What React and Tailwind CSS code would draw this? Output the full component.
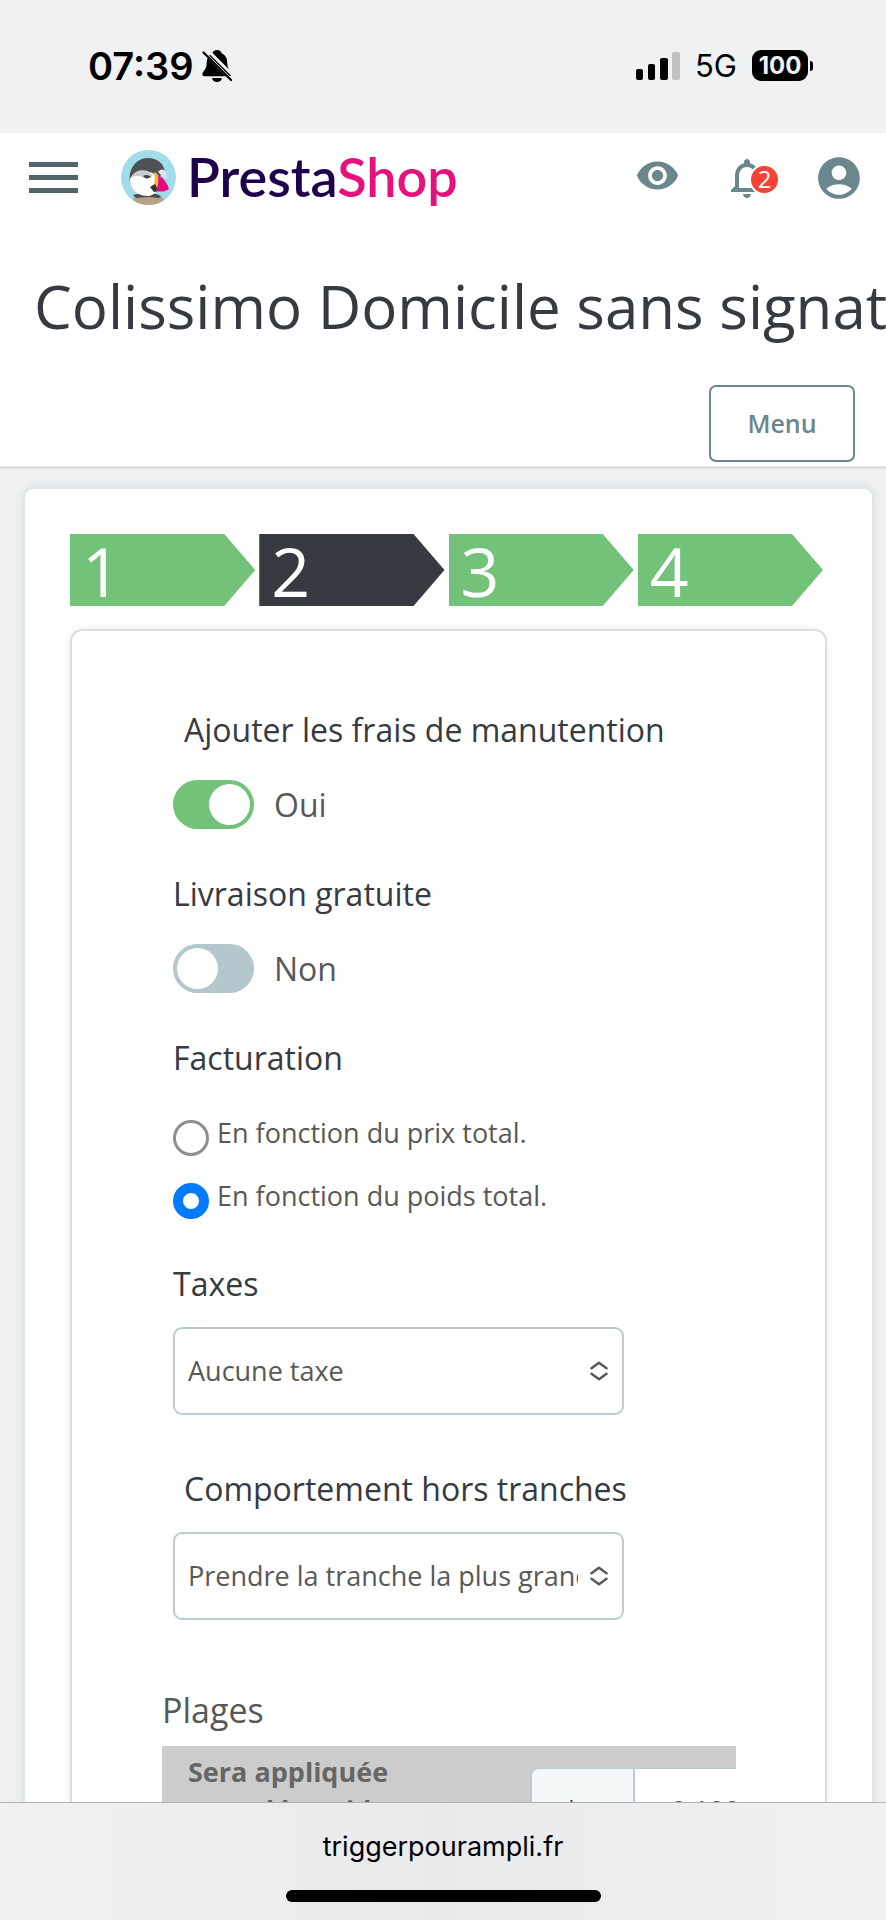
import { useState } from 'react';
import { MdAccountCircle, MdNotificationsNone, MdVisibility } from 'react-icons/md';

const steps = [1, 2, 3, 4];

const taxes = ['Aucune taxe', 'FR Taux standard (20%)', 'FR Taux réduit (5.5%)'];

const behaviors = ['Prendre la tranche la plus grande', 'Désactiver le transporteur'];

const billings = [
  { value: 'price', label: 'En fonction du prix total.' },
  { value: 'weight', label: 'En fonction du poids total.' },
];

function StatusBar() {
  return (
    <div className="flex h-[133px] shrink-0 items-center justify-between bg-[#eff1f3] pb-0.5 pl-[88px] pr-[73px] font-['Inter',sans-serif] text-black">
      <div className="flex items-center gap-2">
        <span className="text-[38px] font-semibold leading-10">07:39</span>
        <svg className="h-8 w-[30px]" viewBox="0 0 30 32">
          <path
            d="M15 0c2.6 0 4.2 1.500 4.700 3.200 3.600 1.500 5.300 4.600 5.500 8.800.2 4.400.8 6.300 2.300 8.200 1.200 1.500 2 2.600 2 4 0 1.300-1 2-2.300 2H2.600C1.200 26.200.4 25.500.4 24.200c0-1.400.9-2.500 2-4 1.600-1.900 2.200-3.800 2.400-8.200.2-4.200 2-7.300 5.500-8.800C10.800 1.500 12.400 0 15 0z"
          />
          <path d="M10 28h10c-.5 2.400-2.300 4-5 4s-4.500-1.600-5-4z" />
          <path d="M0 0.500L30 30.500M3.500-2L33 27.500" stroke="#eff1f3" strokeWidth="3" />
          <path d="M1.500 2.500L29 30" stroke="#000" strokeWidth="2.200" strokeLinecap="round" />
        </svg>
      </div>
      <div className="flex items-center gap-[15px]">
        <svg className="h-7 w-11" viewBox="0 0 44 28">
          <rect x="0" y="17" width="7" height="11" rx="2" />
          <rect x="12" y="12" width="7" height="16" rx="2" />
          <rect x="24" y="6" width="8" height="22" rx="2" />
          <rect x="36" y="0" width="8" height="28" rx="2" fill="#bfc1c3" />
        </svg>
        <span className="text-[31px] leading-10">5G</span>
        <div className="flex items-center gap-0.5">
          <span className="flex h-[31px] w-14 items-center justify-center rounded-[9px] bg-black text-2xl font-bold text-[#eff1f3]">
            100
          </span>
          <span className="h-2.5 w-[3px] rounded-r-full bg-black" />
        </div>
      </div>
    </div>
  );
}

function Logo() {
  return (
    <a href="#" className="ml-[43px] flex items-center gap-[11px]">
      <svg className="h-[55px] w-[55px]" viewBox="0 0 55 55">
        <defs>
          <clipPath id="disc">
            <circle cx="27.500" cy="27.500" r="27.500" />
          </clipPath>
        </defs>
        <g clipPath="url(#disc)">
          <rect width="55" height="55" fill="#a0dcea" />
          <path d="M10 55l2-6 6-4h20l6 5 3 5z" fill="#b7a288" />
          <path d="M12 45l10-2 13 1 5 2-2 2-10-1-13 1z" fill="#4a4a4c" />
          <path d="M9 32C7 19 15 8 27 8c9 0 15 5 17 13l-6 6-12-6-12 3-4 9z" fill="#4d5254" />
          <path d="M9 29c2-6 10-9 19-7 6 1 10 5 9 12 0 7-4 12-10 12-10 0-18-6-18-17z" fill="#fff" />
          <path d="M10 28c3-7 9-9 17-7l5 5c-3 2-6 3-9 2-4-2-8-3-13 0z" fill="#c7ccce" />
          <path d="M37 22c3-4 7-3 8 1l1 6-6-4z" fill="#dfe5e8" />
          <path d="M22 26c3-2 6-1 8 1-3 2-6 2-8-1z" fill="#404447" />
          <path d="M33 22c3 1 5 3 5 5l-2 12-3-4c1-5 1-8 0-13z" fill="#f6b53c" />
          <path d="M29 37l5-3 4 7-5 1z" fill="#303236" />
          <path d="M37 25c5 2 9 8 11 14-4 3-9 3-13 2 2-5 3-10 2-16z" fill="#e6097a" />
        </g>
      </svg>
      <span className="pb-0.5 font-['Lato',sans-serif] text-[54px] font-semibold leading-[55px] text-[#1f004d]">
        Presta<span className="text-[#e6127b]">Shop</span>
      </span>
    </a>
  );
}

function TopNav() {
  return (
    <nav className="flex h-[89px] items-center pl-[29px] pr-[22px]">
      <button aria-label="Ouvrir le menu" className="flex w-[49px] flex-col gap-2">
        <span className="h-[5px] bg-[#506469]" />
        <span className="h-[5px] bg-[#506469]" />
        <span className="h-[5px] bg-[#506469]" />
      </button>
      <Logo />
      <div className="ml-auto flex items-center text-[#6c868e]">
        <a href="#" aria-label="Voir ma boutique" className="pb-1">
          <MdVisibility className="h-[45px] w-[45px]" />
        </a>
        <button aria-label="Notifications" className="relative ml-[43px]">
          <MdNotificationsNone className="h-12 w-12" />
          <span className="absolute left-7 top-3 flex h-[27px] w-[27px] items-center justify-center rounded-full bg-[#f54337] text-2xl text-white ring-2 ring-white">
            2
          </span>
        </button>
        <button aria-label="Mon compte" className="ml-[43px]">
          <MdAccountCircle className="h-[50px] w-[50px]" />
        </button>
      </div>
    </nav>
  );
}

function Switch({ id, label, indent, checked, onChange }) {
  return (
    <div className="mb-[41px]">
      <label htmlFor={id} className={`block text-[32px] leading-[48px] text-[#363a41] ${indent ? 'pl-[11px]' : ''}`}>
        {label}
      </label>
      <div className="mt-[26px] flex items-center gap-5">
        <input
          id={id}
          type="checkbox"
          role="switch"
          checked={checked}
          onChange={(e) => onChange(e.target.checked)}
          className="flex h-[49px] w-[81px] appearance-none items-center rounded-full bg-[#b3c7cd] px-1 before:h-[41px] before:w-[41px] before:rounded-full before:bg-white checked:justify-end checked:bg-[#72c279]"
        />
        <span className="text-[32px] leading-[48px]">{checked ? 'Oui' : 'Non'}</span>
      </div>
    </div>
  );
}

function Select({ id, label, indent, options }) {
  return (
    <div className="mb-[50px]">
      <label htmlFor={id} className={`block text-[32px] leading-[48px] text-[#363a41] ${indent ? 'pl-[11px]' : ''}`}>
        {label}
      </label>
      <div className="relative mt-[19px] w-[451px]">
        <select
          id={id}
          className="h-[88px] w-full appearance-none rounded-[9px] border-2 border-[#bbcdd2] bg-white pl-[13px] pr-11 text-[27px]"
        >
          {options.map((option) => (
            <option key={option}>{option}</option>
          ))}
        </select>
        <svg
          className="pointer-events-none absolute right-4 top-[34px] h-5 w-[18px]"
          viewBox="0 0 18 20"
          fill="none"
          stroke="currentColor"
          strokeWidth="2.500"
          strokeLinecap="round"
          strokeLinejoin="round"
        >
          <path d="M1.500 7.200L9 1.800l7.500 5.400M1.500 12.800L9 18.200l7.500-5.400" />
        </svg>
      </div>
    </div>
  );
}

export default function App() {
  const [handling, setHandling] = useState(true);
  const [free, setFree] = useState(false);
  const [billing, setBilling] = useState('weight');

  return (
    <div className="flex h-screen flex-col overflow-hidden bg-[#eef0f2] font-['Open_Sans',sans-serif] text-[#585858]">
      <StatusBar />

      <div className="min-h-0 flex-1 overflow-hidden">
        {/* En-tête */}
        <header className="border-b-[3px] border-[#dddfe0] bg-white">
          <TopNav />
          <h1 className="overflow-hidden whitespace-nowrap pl-[34px] pt-11 text-[60px] leading-[80px] text-[#363a41]">
            Colissimo Domicile sans signature
          </h1>
          <div className="flex justify-end pb-1 pr-[31px] pt-[39px]">
            <button className="h-[77px] w-[146px] rounded-[7px] border-2 border-[#6c868e] text-[25px] font-semibold text-[#6c868e]">
              Menu
            </button>
          </div>
        </header>

        <main className="ml-[23px] mr-3 mt-[18px] rounded-[10px] border-2 border-[#dbe6e9] bg-white px-[45px] pt-[45px] shadow-[0_0_10px_rgba(0,0,0,0.08)]">
          {/* Étapes */}
          <ol className="grid grid-cols-4">
            {steps.map((step) => (
              <li key={step} className="pr-1">
                <a
                  href="#"
                  className={`block h-[72px] pl-3 text-[68px] leading-[74px] text-white [clip-path:polygon(0_0,calc(100%-31px)_0,100%_50%,calc(100%-31px)_100%,0_100%)]
                   ${step === 2 ? 'bg-[#363a41]' : 'bg-[#72c279]'}`}
                >
                  {step}
                </a>
              </li>
            ))}
          </ol>

          <form className="mt-[23px] rounded-t-xl border-2 border-b-0 border-[#dddddd] pl-[90px] pr-[89px] pt-[75px] shadow-[0_0_12px_rgba(0,0,0,0.06)]">
            <div className="pl-[11px]">
              <Switch
                id="shipping_handling"
                label="Ajouter les frais de manutention"
                indent
                checked={handling}
                onChange={setHandling}
              />
              <Switch id="is_free" label="Livraison gratuite" checked={free} onChange={setFree} />

              <fieldset className="mb-[41px]">
                <legend className="text-[32px] leading-[48px] text-[#363a41]">Facturation</legend>
                <div className="mt-[33px] flex flex-col gap-[22px]">
                  {billings.map(({ value, label }) => (
                    <label key={value} className="flex gap-2 text-[27px] leading-9">
                      <input
                        type="radio"
                        name="shipping_method"
                        value={value}
                        checked={billing === value}
                        onChange={() => setBilling(value)}
                        className="mt-[5px] h-9 w-9 appearance-none rounded-full border-[3px] border-[#8e8e93] bg-white checked:border-[10px] checked:border-[#007aff]"
                      />
                      {label}
                    </label>
                  ))}
                </div>
              </fieldset>

              <Select id="id_tax_rules_group" label="Taxes" options={taxes} />
              <Select id="range_behavior" label="Comportement hors tranches" indent options={behaviors} />
            </div>

            {/* Plages */}
            <h2 className="mt-[66px] text-[34px] leading-[48px]">Plages</h2>
            <div className="mt-3 overflow-hidden">
              <table className="w-[760px] table-fixed border-collapse bg-[#cccccc]">
                <tbody>
                  <tr>
                    <th className="w-[368px] px-[26px] py-[7px] text-left align-top text-[27px] leading-[38px] text-[#666666]">
                      <label htmlFor="range_inf">
                        Sera appliquée
                        <br />
                        quand le poids est &gt;=
                      </label>
                    </th>
                    <td className="pt-[21px] align-top">
                      <div className="flex h-[88px] text-[27px]">
                        <span className="flex w-[105px] items-center justify-center rounded-l-[9px] border-2 border-[#bbcdd2] bg-[#f4f8f9]">
                          kg
                        </span>
                        <input
                          id="range_inf"
                          type="text"
                          defaultValue="0.100000"
                          className="min-w-0 flex-1 border-y-2 border-[#bbcdd2] bg-white pl-9"
                        />
                      </div>
                    </td>
                  </tr>
                </tbody>
              </table>
            </div>
          </form>
        </main>
      </div>

      {/* Barre du navigateur */}
      <footer className="z-10 flex h-[118px] shrink-0 flex-col items-center justify-between border-t border-[#b1b2b4] bg-linear-to-r from-[#eff1f3] via-[#e9eaec] to-[#eff1f3] pb-[18px] pt-6 font-['Inter',sans-serif] text-black">
        <span className="text-[27px] leading-10">triggerpourampli.fr</span>
        <span className="h-3 w-[315px] rounded-full bg-black" />
      </footer>
    </div>
  );
}
